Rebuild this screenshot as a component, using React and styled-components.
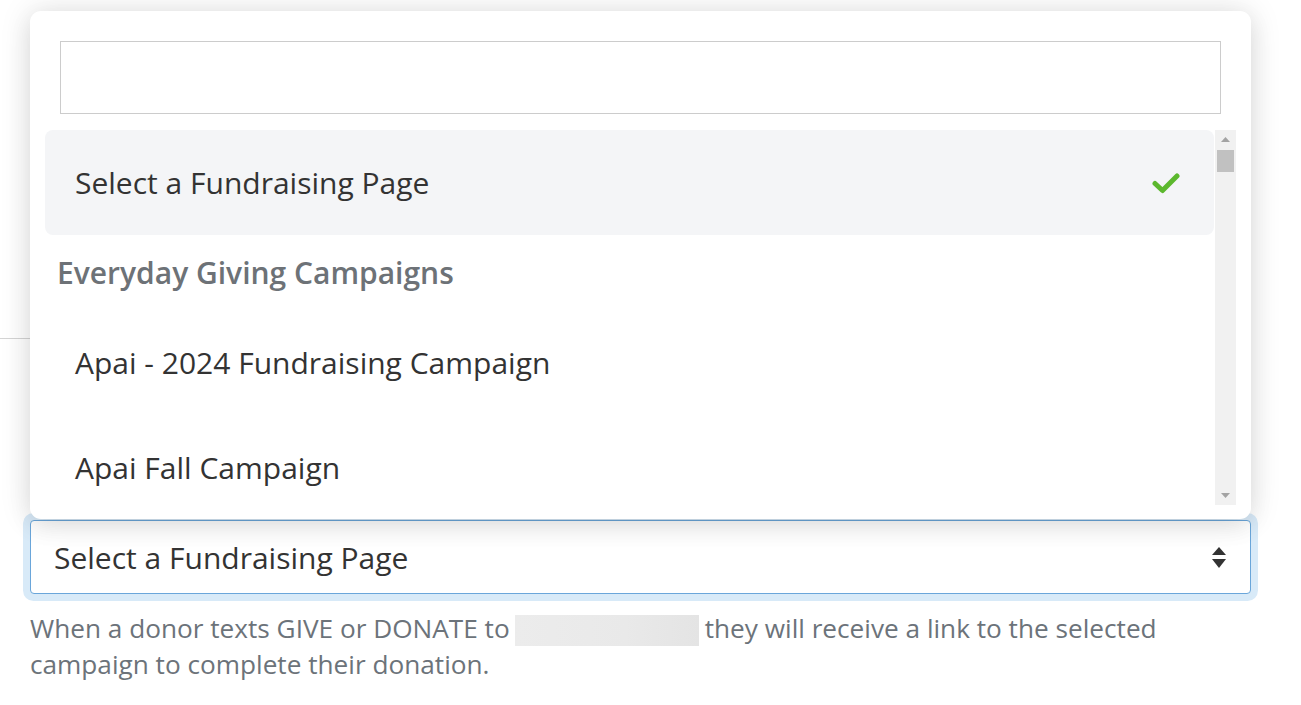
import styled, { createGlobalStyle } from "styled-components";

const GlobalStyle = createGlobalStyle`
  html, body {
    margin: 0;
    padding: 0;
    background: #ffffff;
  }
  body {
    font-family: "Open Sans", "Liberation Sans", sans-serif;
    color: #333333;
  }
`;

const Page = styled.div`
  width: 1301px;
  height: 705px;
  overflow: hidden;
`;

const TopSection = styled.div`
  height: 338px;
  margin-right: 80px;
  border-bottom: 1px solid #d4d4d4;
`;

const Field = styled.div`
  position: relative;
  margin: 181px 50px 0 30px;
`;

const SelectBox = styled.div`
  display: flex;
  align-items: center;
  justify-content: space-between;
  height: 72px;
  padding: 0 24px 0 23px;
  border: 1px solid #6aa6da;
  border-radius: 4px;
  background: #ffffff;
  box-shadow: 0 0 0 7px #d8eaf8;
  font-size: 30px;
  color: #333333;
`;

const Help = styled.p`
  margin: 16px 0 0;
  font-size: 26.2px;
  line-height: 36px;
  color: #6c737a;
`;

const Redacted = styled.span`
  display: inline-block;
  width: 184px;
  height: 31px;
  vertical-align: -8px;
  margin: 0 6px 0 5px;
  background: linear-gradient(90deg, #ececec, #e9e9e9 60%, #e4e4e4);
`;

const Menu = styled.div`
  position: absolute;
  left: 0;
  right: 0;
  bottom: calc(100% + 1px);
  height: 508px;
  box-sizing: border-box;
  padding: 30px 15px 14px;
  background: #ffffff;
  border-radius: 11px;
  box-shadow: 0 0 32px rgba(0, 0, 0, 0.12), 0 8px 24px rgba(0, 0, 0, 0.07);
  display: flex;
  flex-direction: column;
  z-index: 10;
`;

const Search = styled.div`
  height: 71px;
  margin: 0 15px 16px;
  border: 1px solid #cccccc;
  background: #ffffff;
`;

const ListArea = styled.div`
  flex: 1;
  display: flex;
  min-height: 0;
`;

const Options = styled.div`
  flex: 1;
  overflow: hidden;
`;

const Option = styled.div`
  display: flex;
  align-items: center;
  justify-content: space-between;
  height: 105px;
  padding: 0 34px 0 30px;
  border-radius: 8px;
  font-size: 30px;
  color: #333333;
  background: ${(p) => (p.$selected ? "#f4f5f7" : "transparent")};
`;

const GroupLabel = styled.div`
  display: flex;
  align-items: center;
  height: 75px;
  padding-left: 12px;
  font-size: 30px;
  font-weight: 600;
  color: #6d7277;
`;

const Scrollbar = styled.div`
  width: 21px;
  margin-left: 1px;
  background: #f1f1f1;
  display: flex;
  flex-direction: column;
  align-items: center;
`;

const ScrollArrow = styled.div`
  height: 19px;
  width: 100%;
  display: flex;
  align-items: center;
  justify-content: center;
`;

const Thumb = styled.div`
  width: 17px;
  height: 22px;
  margin-top: 1px;
  background: #c1c1c1;
`;

const Track = styled.div`
  flex: 1;
`;

function Check() {
  return (
    <svg width="28" height="22" viewBox="0 0 28 22">
      <path
        d="M3 11.5 L10.5 18.5 L25 4"
        fill="none"
        stroke="#5cb82e"
        strokeWidth="5"
        strokeLinecap="round"
        strokeLinejoin="round"
      />
    </svg>
  );
}

function SortIcon() {
  return (
    <svg width="14" height="21" viewBox="0 0 14 21">
      <path d="M7 0 L14 8 L0 8 Z" fill="#333333" />
      <path d="M0 12 L14 12 L7 21 Z" fill="#333333" />
    </svg>
  );
}

function Triangle({ up }) {
  return (
    <svg width="9" height="5" viewBox="0 0 9 5">
      <path d={up ? "M4.5 0 L9 5 L0 5 Z" : "M0 0 L9 0 L4.5 5 Z"} fill="#a3a3a3" />
    </svg>
  );
}

export default function App() {
  return (
    <Page>
      <GlobalStyle />
      <TopSection />
      <Field>
        <Menu>
          <Search />
          <ListArea>
            <Options>
              <Option $selected>
                Select a Fundraising Page
                <Check />
              </Option>
              <GroupLabel>Everyday Giving Campaigns</GroupLabel>
              <Option>Apai - 2024 Fundraising Campaign</Option>
              <Option>Apai Fall Campaign</Option>
            </Options>
            <Scrollbar>
              <ScrollArrow>
                <Triangle up />
              </ScrollArrow>
              <Thumb />
              <Track />
              <ScrollArrow>
                <Triangle />
              </ScrollArrow>
            </Scrollbar>
          </ListArea>
        </Menu>
        <SelectBox>
          Select a Fundraising Page
          <SortIcon />
        </SelectBox>
        <Help>
          When a donor texts GIVE or DONATE to
          <Redacted />
          they will receive a link to the selected campaign to complete their
          donation.
        </Help>
      </Field>
    </Page>
  );
}
